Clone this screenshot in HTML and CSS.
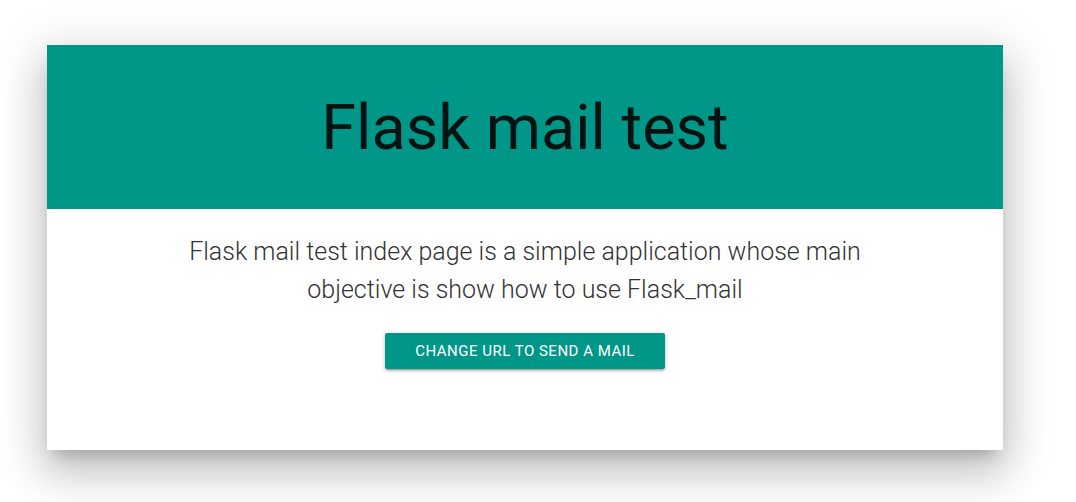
FILE: index.html
```html
<!DOCTYPE html>
<html>
<head>
<meta charset="utf-8">
<link rel="stylesheet" href="styles.css">
</head>
<body>
<div class="card">
  <div class="card-header">
    <h1 class="title">Flask mail test</h1>
  </div>
  <div class="card-body">
    <p class="lead">Flask mail test index page is a simple application whose main objective is show how to use Flask_mail</p>
    <button class="btn">Change URL to send a mail</button>
  </div>
</div>
</body>
</html>
```
FILE: styles.css
```css
html, body {
  margin: 0;
  padding: 0;
  background: #ffffff;
  font-family: Roboto, "Liberation Sans", sans-serif;
}
html {
  height: 100%;
}
body {
  min-height: 100%;
  box-sizing: border-box;
  padding: 45px 0 0 47px;
}
.card {
  width: 956px;
  height: 405px;
  background: #fff;
  box-shadow: 0 24px 38px 3px rgba(0,0,0,.14), 0 9px 46px 8px rgba(0,0,0,.12), 0 11px 15px -7px rgba(0,0,0,.2);
  display: flex;
  flex-direction: column;
}
.card-header {
  height: 164px;
  background: #009688;
  display: flex;
  align-items: center;
  justify-content: center;
}
.title {
  margin: 0;
  font-size: 63px;
  font-weight: 400;
  color: rgba(0,0,0,0.87);
  line-height: 1;
}
.card-body {
  display: flex;
  flex-direction: column;
  align-items: center;
  padding-top: 24px;
}
.lead {
  margin: 0;
  width: 720px;
  text-align: center;
  font-size: 25px;
  font-weight: 300;
  line-height: 38px;
  color: #333;
}
.btn {
  margin-top: 24px;
  height: 36px;
  padding: 0 30px;
  border: none;
  border-radius: 2px;
  background: #009688;
  color: #fff;
  font-family: Roboto, "Liberation Sans", sans-serif;
  font-size: 15px;
  letter-spacing: .5px;
  text-transform: uppercase;
  box-shadow: 0 2px 2px 0 rgba(0,0,0,.14), 0 3px 1px -2px rgba(0,0,0,.12), 0 1px 5px 0 rgba(0,0,0,.2);
}
```
